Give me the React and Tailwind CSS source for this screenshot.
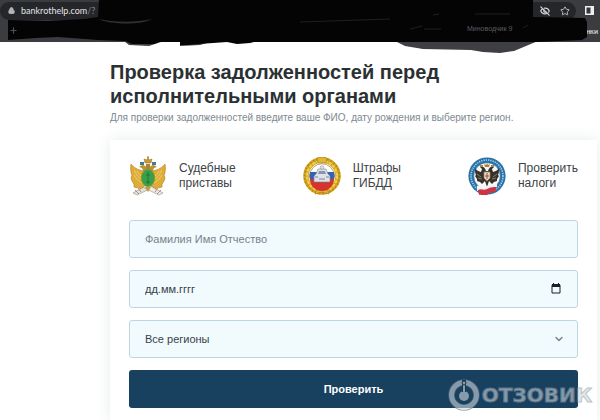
import { useState } from "react";
import { ChevronDown, EyeOff, Lock, Plus, Star } from "lucide-react";

const fieldClass =
  "h-[38px] w-full appearance-none rounded-[3px] border border-[#bdd6e2] bg-[#f1fafd] px-[15px] text-[11px] text-[#37424a] outline-none focus:border-[#18405f]";

function BailiffsEmblem() {
  return (
    <svg viewBox="0 0 38 40" className="h-10 w-[38px] shrink-0" aria-hidden="true">
      {/* crossed scrolls */}
      <path d="M4 37 25 25l4 4L8 39z" fill="#e4e1da" stroke="#96908a" strokeWidth=".6" />
      <path d="M34 37 13 25l-4 4 21 10z" fill="#eeece7" stroke="#96908a" strokeWidth=".6" />
      <path d="m6 34 4 4M32 34l-4 4M9 32l3 4M29 32l-3 4" stroke="#b4705a" strokeWidth=".8" />
      {/* wings */}
      <path
        d="M16 15C12 15 6 13 2 8c-1 5 0 9 1 12l-1 1c0 3 2 6 3 7l0 3c2 1 4 1 5 0l1 2 6-4z"
        fill="#dcae38"
        stroke="#b07e20"
        strokeWidth=".6"
      />
      <path
        d="M22 15c4 0 10-2 14-7 1 5 0 9-1 12l1 1c0 3-2 6-3 7v3c-2 1-4 1-5 0l-1 2-6-4z"
        fill="#dcae38"
        stroke="#b07e20"
        strokeWidth=".6"
      />
      <path
        d="M5 14c2 5 5 8 9 10M5 19c2 4 5 6 8 8M8 15c1 3 4 5 6 6M33 14c-2 5-5 8-9 10M33 19c-2 4-5 6-8 8M30 15c-1 3-4 5-6 6"
        fill="none"
        stroke="#f0cf6c"
        strokeWidth=".9"
      />
      {/* heads and crowns */}
      <path d="M18 15c0-4-2-6-5-6l-3 2 3 1 2 5zM20 15c0-4 2-6 5-6l3 2-3 1-2 5z" fill="#bd9231" />
      <path d="M11 6h4v3h-4zM23 6h4v3h-4z" fill="#3e7f92" />
      <path d="M16 7l-1-4 3 1 1-3 1 3 3-1-1 4z" fill="#cb9b2e" stroke="#8e6a20" strokeWidth=".5" />
      <path d="M19 0v3M18 1h2" stroke="#b88628" strokeWidth=".7" />
      <path d="M17 8h4v5h-4z" fill="#a8843f" />
      {/* shield */}
      <ellipse cx="19" cy="22" rx="6.5" ry="8.5" fill="#36a04b" stroke="#7c9335" />
      <path d="M19 16v12M17 19h4M17 26h4" stroke="#247536" strokeWidth="1" />
      <path d="m16 31 3 5 3-5" fill="#c89a3b" />
    </svg>
  );
}

function TrafficEmblem() {
  return (
    <svg viewBox="0 0 38 38" className="size-[38px] shrink-0" aria-hidden="true">
      <circle cx="19" cy="19" r="16" fill="none" stroke="#d6a922" strokeWidth="5.5" />
      <circle
        cx="19"
        cy="19"
        r="17.4"
        fill="none"
        stroke="#bd8c18"
        strokeWidth="2"
        strokeDasharray="2 1.6"
      />
      <circle
        cx="19"
        cy="19"
        r="15"
        fill="none"
        stroke="#f1d252"
        strokeWidth="2"
        strokeDasharray="3 1.3"
      />
      <path d="m14 1 5-1 5 1-1 5h-8zM14 32h10l2 5-7-2-7 2z" fill="#e0b633" stroke="#a67a18" strokeWidth=".6" />
      <circle cx="19" cy="19" r="12.3" fill="#fff" stroke="#9b7a2f" strokeWidth=".7" />
      <path d="M7 15h24a12 12 0 0 1 0 7H7a12 12 0 0 1 0-7z" fill="#3563b4" />
      <path d="M7 22h24a12 12 0 0 1-24 0z" fill="#d6332f" />
      {/* patrol car */}
      <path d="M13 17l2-5h8l2 5 2 2v6H11v-6z" fill="#dfe3e9" stroke="#7b8290" strokeWidth=".6" />
      <path d="m15 17 1-3h6l1 3z" fill="#8995a8" />
      <circle cx="19" cy="10.5" r="1.8" fill="#dfe3e9" stroke="#7b8290" strokeWidth=".5" />
      <path d="M12 20h3M23 20h3M16 22h6" stroke="#7d8798" strokeWidth="1.2" />
    </svg>
  );
}

function TaxEmblem() {
  return (
    <svg viewBox="0 0 38 38" className="size-[38px] shrink-0" aria-hidden="true">
      <circle cx="19" cy="19" r="18.6" fill="#2872a9" />
      <circle
        cx="19"
        cy="19"
        r="16"
        fill="none"
        stroke="#a9cde2"
        strokeWidth="1.6"
        strokeDasharray="1.3 1"
      />
      <circle cx="19" cy="19" r="13.3" fill="#f9f9f7" stroke="#1f6197" strokeWidth=".6" />
      {/* double-headed eagle */}
      <path
        d="M18 14c-1-4-3-5-6-4l2 2-1 3c-3-1-5-2-6-4 0 3 0 5 1 7l-1 1 2 3 0 2 3 1 2 2 3-3 2 6 2-6 3 3 2-2 3-1v-2l2-3-1-1c1-2 1-4 1-7-1 2-3 3-6 4l-1-3 2-2c-3-1-5 0-6 4z"
        fill="#35322f"
      />
      <path d="m17 10-1-3 2 1 1-2 1 2 2-1-1 3zM12 8h3v2h-3zM23 8h3v2h-3z" fill="#a88338" />
      <path d="M9 17l4 3M10 21l4 1M29 17l-4 3M28 21l-4 1" stroke="#b49a6a" strokeWidth=".7" />
      <path d="M16 15h6v6l-3 3-3-3z" fill="#e6ddd1" stroke="#a38548" strokeWidth=".7" />
      <path d="M19 16v6M17 19h4" stroke="#ad4432" strokeWidth="1" />
      {/* ribbon */}
      <path d="M9 29c3-2 7 2 10 0s6-1 10-2v4c-4 1-7 1-10 3s-7-1-10 0z" fill="#f3f4f7" />
      <path d="M10 33c4-2 5 1 9-1s6-2 10-2l-2 5c-4 0-5 1-8 3s-6-1-8 0z" fill="#cd3542" />
    </svg>
  );
}

const services = [
  { lines: ["Судебные", "приставы"], Emblem: BailiffsEmblem },
  { lines: ["Штрафы", "ГИБДД"], Emblem: TrafficEmblem },
  { lines: ["Проверить", "налоги"], Emblem: TaxEmblem },
];

function BrowserBar() {
  return (
    <header className="relative h-[42px] bg-[#3b3c40] text-white">
      <div className="flex h-[21px] items-center justify-between pr-[6px]">
        <div className="flex h-[18px] flex-1 items-center gap-[6px] rounded-full bg-[#25262a] pl-[8px] font-[Lato,sans-serif] text-[9px]">
          <Lock className="size-[7px] fill-[#b5b6b9] text-[#b5b6b9]" strokeWidth={3} />
          <span className="text-[#e4e4e6]">
            bankrothelp.com<span className="text-[#85868a]">/?</span>
          </span>
          <span className="ml-auto flex gap-[10px] pr-[6px] text-[#d2d3d6]">
            <EyeOff className="size-[10px]" strokeWidth={3} />
            <Star className="size-[10px]" strokeWidth={2} />
          </span>
        </div>
        <svg viewBox="0 0 9 9" className="ml-[9px] size-[9px]" aria-hidden="true">
          <path d="M0 0h9v9H0z" fill="#eeeeef" />
          <path d="M1.5 1.5h4v6h-4z" fill="#35363a" />
        </svg>
      </div>
      <div className="flex h-[21px] items-center justify-end pr-[2px] font-[Lato,sans-serif] text-[7px] font-bold text-[#d4d5d8]">
        нки
      </div>
      {/* marker strokes over the tabs and bookmarks */}
      <svg
        viewBox="0 0 600 54"
        preserveAspectRatio="none"
        className="absolute top-0 left-0 h-[54px] w-full"
        aria-hidden="true"
      >
        <path d="M395 41l10 5 18 3 48 1 12 2 17 1 14-2 24-10z" fill="#3e3f42" />
        <path d="M124 41l5 4 20 1 12-4zM180 41v5l20-1 10-3z" fill="#3e3f42" />
        <path
          d="M99 0h434v17l52 1 2 4v15l-5 3-46 2H254l-4 1-13 1-10-2-14 1-15 1-10 1h-8v-3h-21l-5 2h-22l-7-3-27-1-40-3-22 1-28 2V20l40 1 36-2 14-2z"
          fill="#040405"
        />
        <path d="M98 19c14 3 36 4 54 0-10 6-40 6-54 0z" fill="#303134" />
        <path
          d="M300 22l90-3M410 29l12-3M424 29h17M475 14h35M433 15l6-1M523 28l5-3"
          stroke="#1f1f21"
          fill="none"
        />
      </svg>
      <Plus className="absolute top-[26px] left-[9px] size-[9px] text-[#505155]" strokeWidth={3} />
      <span className="absolute top-[24px] left-[467px] text-[7px] text-[#5c5c60]">Миноводчик 9</span>
    </header>
  );
}

function Watermark() {
  return (
    <div className="pointer-events-none absolute right-[8px] bottom-[9px] flex items-center gap-[2px] opacity-60">
      <svg viewBox="0 0 32 32" className="size-8" aria-hidden="true">
        <circle cx="16" cy="16" r="12.5" fill="none" stroke="#64717c" strokeWidth="6.5" />
        <circle cx="16" cy="16" r="12.5" fill="none" stroke="#ced7dd" strokeWidth="5" />
        <circle cx="16" cy="17" r="5" fill="#ced7dd" />
        <path d="M16 1v12" stroke="#203747" strokeWidth="4" />
        <path d="M16 5v10" stroke="#ced7dd" strokeWidth="2" />
        <circle cx="16" cy="4" r="2" fill="#ced7dd" stroke="#203747" />
      </svg>
      <span className="font-['DejaVu_Sans',sans-serif] text-[20px] leading-5 font-bold text-[#ced7dd] [-webkit-text-stroke:1px_#8f9aa2]">
        ОТЗОВИК
      </span>
    </div>
  );
}

export default function App() {
  const [name, setName] = useState("");
  const [date, setDate] = useState("");

  return (
    <div className="relative min-h-screen overflow-hidden bg-white font-['Liberation_Sans',Arial,sans-serif]">
      <BrowserBar />
      <main className="pt-[18px] pr-[3px] pl-[110px]">
        <h1 className="text-[20px] leading-6 font-bold text-[#2b3033]">
          Проверка задолженностей перед
          <br />
          исполнительными органами
        </h1>
        <p className="mt-[2px] text-[10px] leading-4 text-[#7e898f]">
          Для проверки задолженностей введите ваше ФИО, дату рождения и выберите регион.
        </p>
        <section className="mt-[14px] px-[19px] pt-4 pb-3 shadow-[0_0_14px_rgba(60,80,95,0.12)]">
          <ul className="flex justify-between">
            {services.map(({ lines, Emblem }) => (
              <li key={lines[0]} className="flex h-10 items-center gap-3">
                <Emblem />
                <span className="text-[12px] leading-[15px] text-[#3d4246]">
                  {lines[0]}
                  <br />
                  {lines[1]}
                </span>
              </li>
            ))}
          </ul>
          <form className="mt-6 flex flex-col gap-3" onSubmit={(e) => e.preventDefault()}>
            <input
              type="text"
              aria-label="Фамилия Имя Отчество"
              placeholder="Фамилия Имя Отчество"
              value={name}
              onChange={(e) => setName(e.target.value)}
              className={`${fieldClass} placeholder:text-[#75838c]`}
            />
            <div className="relative">
              <input
                type="text"
                aria-label="Дата рождения"
                placeholder="дд.мм.гггг"
                value={date}
                onChange={(e) => setDate(e.target.value)}
                className={`${fieldClass} placeholder:text-[#37424a]`}
              />
              <button type="button" aria-label="Календарь" className="absolute top-[13px] right-[17px]">
                <svg viewBox="0 0 10 11" className="h-[11px] w-[10px]">
                  <path d="M1 2h8v8H1z" fill="none" stroke="#182026" />
                  <path d="M1 1h8v3H1zM2 0h1v2H2zM7 0h1v2H7z" fill="#182026" />
                </svg>
              </button>
            </div>
            <div className="relative">
              <select aria-label="Регион" className={fieldClass}>
                <option>Все регионы</option>
              </select>
              <ChevronDown
                className="pointer-events-none absolute top-[13px] right-[13px] size-3 text-[#7a878e]"
                strokeWidth={3}
              />
            </div>
            <button
              type="submit"
              className="h-[38px] rounded-[3px] bg-[#18405f] text-[11px] font-bold text-white"
            >
              Проверить
            </button>
          </form>
        </section>
      </main>
      <Watermark />
    </div>
  );
}
